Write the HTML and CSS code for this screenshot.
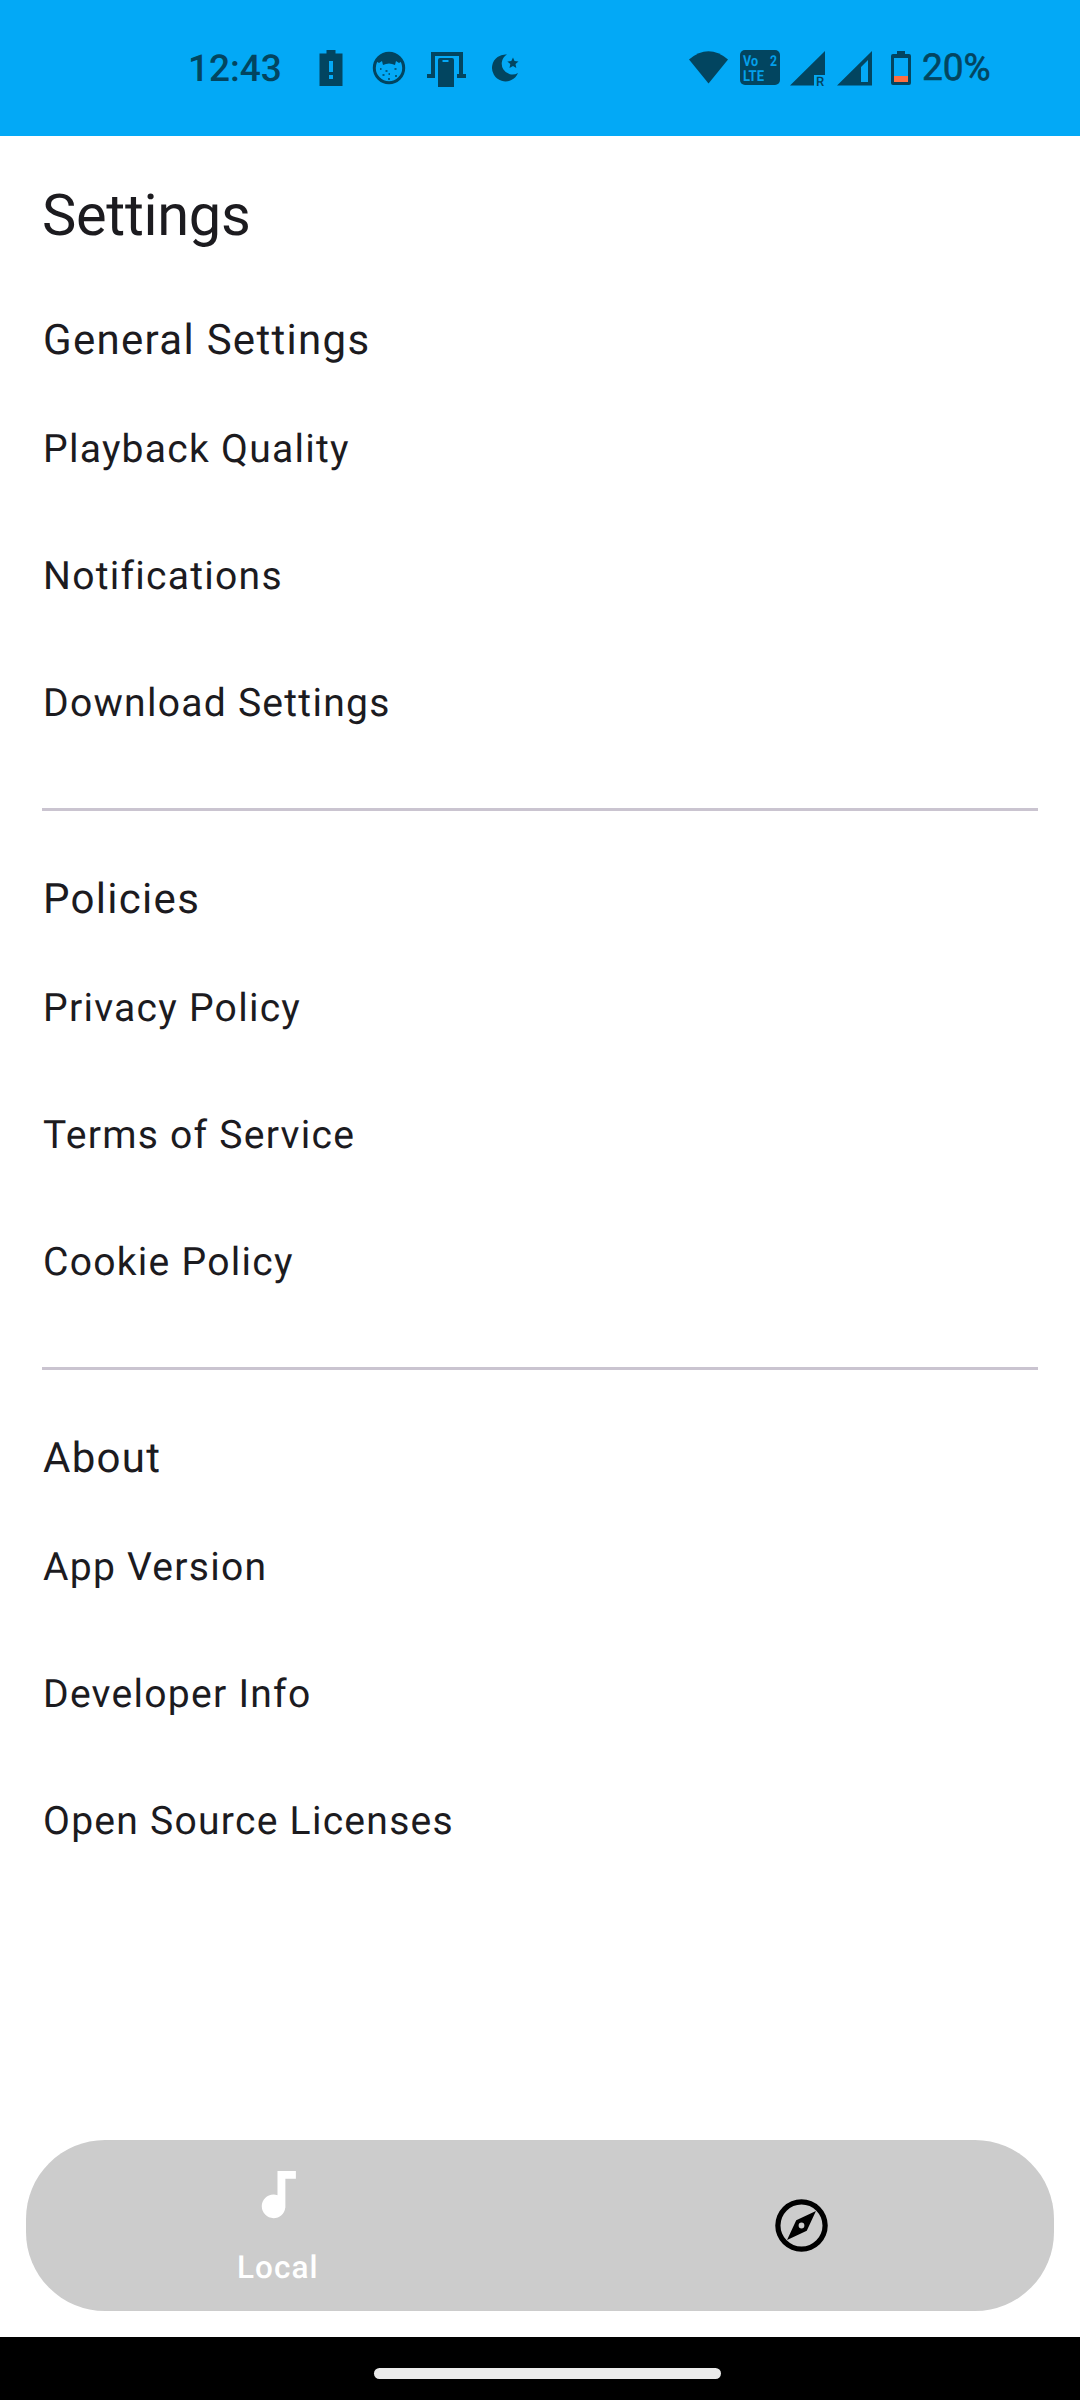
FILE: index.html
```html
<!DOCTYPE html>
<html lang="en">
<head>
<meta charset="utf-8">
<title>Settings</title>
<link rel="stylesheet" href="styles.css">
</head>
<body>
<header class="status">
  <span class="clock">12:43</span>
  <svg class="notifications" width="208" height="40" viewBox="317 48 208 40" fill="currentColor">
    <path fill-rule="evenodd" d="M326.500 50h9v3.500h7v32.500h-23V53.500h7zM329 61v11h4V61zM329 75v4h4v-4z"/>
    <circle cx="389" cy="68" r="14.700" fill="none" stroke="currentColor" stroke-width="3"/>
    <path d="M376 61q4-7 13-7t13 7l-3 2-3-2-1 4q-6-3-12 0l-1-4-3 2z"/>
    <path d="M380 69h1.500m4 2h2m7-2h2m-14 6h2m4-1h1.500m5 2h2m-9 3h2" stroke="currentColor" stroke-width="1.500"/>
    <path d="M433 74V54h28v20" fill="none" stroke="currentColor" stroke-width="4"/>
    <path fill-rule="evenodd" d="M440 58h12q2 0 2 2v27h-16V60q0-2 2-2zM442.500 60v2h6v-2z"/>
    <path d="M427 74h8v4h-8zM457 74h9v4h-9z"/>
    <path d="M507 54.500a13.500 13.500 0 1 0 11 18.500a10.500 10.500 0 0 1-11-18.500z"/>
    <path d="M513 57.500l1.500 3.500 4 .5-3 2.500.8 4-3.300-2-3.500 2 .8-4-3-2.500 4-.5z"/>
  </svg>
  <svg class="signals" width="224" height="46" viewBox="688 48 224 46" fill="currentColor">
    <path d="M689 59.500Q708.500 43 728 59.500L708.500 83.500z"/>
    <rect x="740" y="50" width="40" height="35" rx="5"/>
    <g class="lte" fill="#04a0ea"><text x="743" y="65.500" textLength="15" lengthAdjust="spacingAndGlyphs">Vo</text><text x="770" y="65.500" textLength="7" lengthAdjust="spacingAndGlyphs">2</text><text x="743" y="80.500" textLength="21" lengthAdjust="spacingAndGlyphs">LTE</text></g>
    <path d="M825 51v24h-11v10.500h-24z"/>
    <text class="roam" x="816" y="86">R</text>
    <path fill-rule="evenodd" d="M872 51v34.500h-35zM868 60l-7 7v15h7z"/>
    <path fill-rule="evenodd" d="M897 51h8v3h4q2 0 2 2v27q0 2-2 2h-16q-2 0-2-2V56q0-2 2-2h4zM894 58v24h14V58z"/>
    <path fill="#ff6e40" d="M894 76h14v6h-14z"/>
  </svg>
  <span class="percent">20%</span>
</header>
<main class="content">
  <h1>Settings</h1>
  <section>
    <h2>General Settings</h2>
    <ul><li>Playback Quality</li><li>Notifications</li><li>Download Settings</li></ul>
  </section>
  <section>
    <h2>Policies</h2>
    <ul><li>Privacy Policy</li><li>Terms of Service</li><li>Cookie Policy</li></ul>
  </section>
  <section>
    <h2>About</h2>
    <ul><li>App Version</li><li>Developer Info</li><li>Open Source Licenses</li></ul>
  </section>
</main>
<nav class="tabs">
  <a class="tab active">
    <svg width="63" height="63" viewBox="0 0 24 24" fill="currentColor"><path d="M12 3v9.280c-.47-.17-.97-.28-1.500-.28C8.010 12 6 14.010 6 16.500S8.010 21 10.500 21c2.310 0 4.200-1.750 4.450-4H15V6h4V3h-7z"/></svg>
    <span>Local</span>
  </a>
  <a class="tab">
    <svg width="63" height="63" viewBox="0 0 24 24" fill="currentColor"><path fill-rule="evenodd" d="M12 2a10 10 0 1 0 0 20a10 10 0 1 0 0-20zM12 4a8 8 0 1 1 0 16a8 8 0 1 1 0-16zM6.500 17.500l7.510-3.490L17.500 6.500 9.990 9.990zM12 10.900a1.100 1.100 0 1 1 0 2.200a1.100 1.100 0 1 1 0-2.200z"/></svg>
  </a>
</nav>
<footer class="gesture"><div class="handle"></div></footer>
</body>
</html>
```
FILE: styles.css
```css
* { box-sizing: border-box; margin: 0; padding: 0; }
body {
  width: 1080px; height: 2400px; background: #fff; color: #1c1b1f;
  font-family: Roboto, sans-serif; text-rendering: geometricPrecision;
  display: flex; flex-direction: column;
}
.status {
  height: 136px; background: #03a9f6; color: #024560;
  display: flex; align-items: flex-start; padding: 48px 0 0 188px;
  font-size: 37px; line-height: 42px; font-weight: 500;
}
.clock { width: 129px; padding-top: 1px; }
.notifications { margin-right: 163px; }
.percent { margin-left: 10px; font-weight: 400; -webkit-text-stroke: 0.6px; }
.lte { font: 700 15px/1 Roboto, sans-serif; }
.roam { font: 500 13px/1 Roboto, sans-serif; }
.content { padding: 38px 42px 0; flex: 1; }
h1 { font-size: 57.75px; line-height: 84px; font-weight: 400; letter-spacing: -0.3px; margin-bottom: 51px; }
h2 { font-size: 42px; line-height: 63px; font-weight: 400; letter-spacing: 1.3px; margin-bottom: 13px; padding-left: 1px; }
section + section { margin-top: 42px; border-top: 3px solid #cac4d0; padding-top: 57px; }
ul { list-style: none; }
li { height: 127px; padding-left: 1px; font-size: 39.1px; line-height: 129px; letter-spacing: 1.25px; }
.tabs {
  height: 171px; margin: 0 26px 26px; border-radius: 79px; background: #ccc; color: #000;
  display: flex; gap: 20px; padding-right: 1px;
}
.tab { flex: 1; display: flex; flex-direction: column; align-items: center; justify-content: center; }
.active { color: #fff; justify-content: flex-start; padding-top: 23px; }
.active span { margin-top: 21px; font-size: 31.5px; line-height: 42px; font-weight: 500; letter-spacing: 1px; }
.gesture { height: 63px; background: #000; padding: 31px 0 0 374px; }
.handle { width: 347px; height: 11px; border-radius: 6px; background: #ebebeb; }
```
